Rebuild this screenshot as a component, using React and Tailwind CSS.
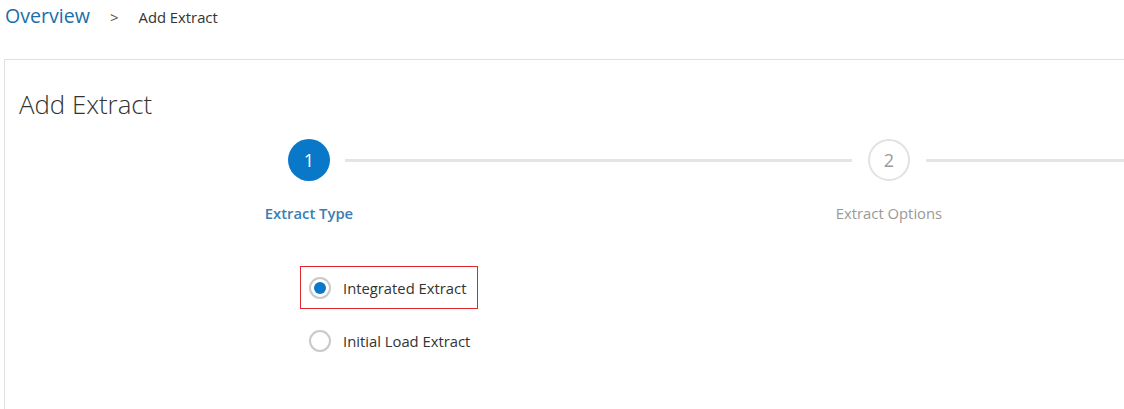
import React from "react";

function Radio({ checked, label, boxed }) {
  return (
    <div
      className={`flex items-center h-[43px] w-[178px] pl-[8px] border ${
        boxed ? "border-[#e0262d]" : "border-transparent"
      }`}
    >
      <span className="w-[22px] h-[22px] rounded-full border-2 border-[#c9c9c9] flex items-center justify-center bg-white">
        {checked && <span className="w-[12px] h-[12px] rounded-full bg-[#0a78c8]" />}
      </span>
      <span className="ml-[12px] text-[14.8px] text-[#333333] leading-[20px]">{label}</span>
    </div>
  );
}

export default function App() {
  return (
    <div
      className="w-[1124px] h-[409px] overflow-hidden bg-white"
      style={{ fontFamily: '"Open Sans", "Noto Sans", Arial, sans-serif' }}
    >
      <div className="h-[59px] flex items-baseline pl-[5px] pt-[2px]">
        <span className="text-[19.6px] leading-[28px] text-[#1b6ea8]">Overview</span>
        <span className="ml-[20px] text-[15px] text-[#555555]">&gt;</span>
        <span className="ml-[20px] text-[14.8px] text-[#333333]">Add Extract</span>
      </div>
      <div className="ml-[4px] w-[1140px] h-[400px] border-t border-l border-[#e0e0e0]">
        <div className="pt-[26px] pl-[14px]">
          <h1 className="text-[25.8px] leading-[36px] font-light text-[#333333]">Add Extract</h1>
        </div>
        <div className="mt-[17px] flex items-center pl-[283px]">
          <div className="w-[42px] h-[42px] rounded-full bg-[#0a78c8] flex items-center justify-center text-white text-[18px]">
            1
          </div>
          <div className="ml-[15px] mr-[16px] w-[507px] h-[3px] bg-[#e4e4e4]" />
          <div className="w-[42px] h-[42px] rounded-full border-2 border-[#e2e2e2] bg-white flex items-center justify-center text-[#999999] text-[18px]">
            2
          </div>
          <div className="ml-[16px] flex-1 h-[3px] bg-[#e4e4e4]" />
        </div>
        <div className="mt-[22px] flex pl-[204px] text-[14.8px] leading-[20px]">
          <div className="w-[200px] text-center font-semibold text-[#3a7db5]">Extract Type</div>
          <div className="ml-[380px] w-[200px] text-center text-[#999999]">Extract Options</div>
        </div>
        <div className="mt-[43px] pl-[295px] flex flex-col gap-[10px]">
          <Radio checked boxed label="Integrated Extract" />
          <Radio label="Initial Load Extract" />
        </div>
      </div>
    </div>
  );
}
